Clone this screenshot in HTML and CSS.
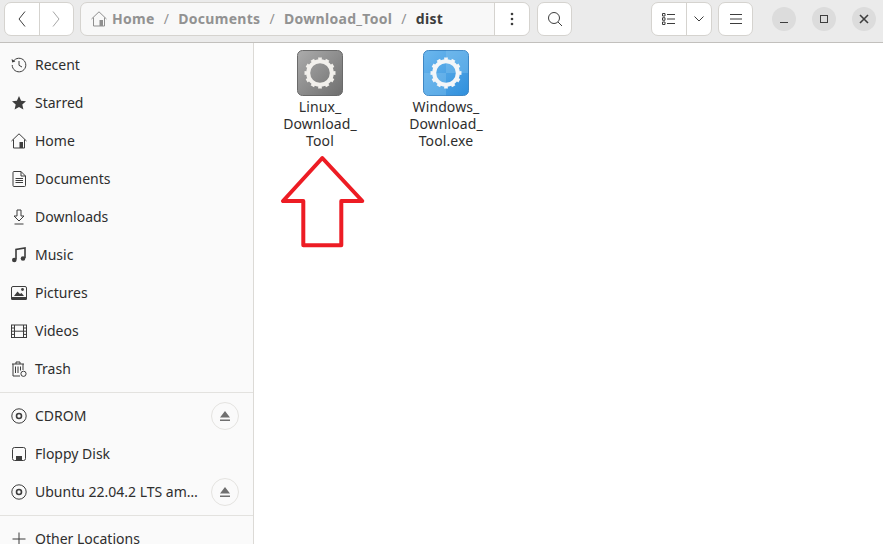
FILE: index.html
```html
<!DOCTYPE html>
<html lang="en">
<head>
<meta charset="utf-8">
<title>dist</title>
<link rel="stylesheet" href="styles.css">
</head>
<body>
<div class="window">
  <header class="toolbar">
    <div class="group nav">
      <button class="btn seg"><svg width="16" height="16" viewBox="0 0 16 16"><path d="M11 0.5 L5 8 L11 15.5" class="ln"/></svg></button>
      <button class="btn seg dim"><svg width="16" height="16" viewBox="0 0 16 16"><path d="M5 0.5 L11 8 L5 15.5" class="ln"/></svg></button>
    </div>
    <div class="group path">
      <div class="crumbs">
        <svg class="home-ic" width="16" height="16" viewBox="0 0 16 16"><path d="M0.5 8 L8 0.8 L15.5 8 M2.5 6.5 V15 H13.5 V6.5" class="ln"/><rect x="8.5" y="9" width="3.5" height="6" fill="#8f8f8f"/></svg>
        <span class="crumb">Home</span><span class="sep">/</span>
        <span class="crumb">Documents</span><span class="sep">/</span>
        <span class="crumb">Download_Tool</span><span class="sep">/</span>
        <span class="crumb cur">dist</span>
      </div>
      <button class="btn more"><svg width="4" height="14" viewBox="0 0 4 14"><circle cx="2" cy="2" r="1.3" fill="#3d3d3d"/><circle cx="2" cy="7" r="1.3" fill="#3d3d3d"/><circle cx="2" cy="12" r="1.3" fill="#3d3d3d"/></svg></button>
    </div>
    <button class="group btn single search"><svg width="16" height="16" viewBox="0 0 16 16"><circle cx="7" cy="7" r="5.5" class="ln"/><path d="M11 11 L15 15" class="ln"/></svg></button>
    <div class="group view">
      <button class="btn vlist"><svg width="14" height="12" viewBox="0 0 14 12"><path d="M0.5 0.5h2.500v2.500h-2.500zM0.5 4.750h2.500v2.500h-2.500zM0.5 9h2.500v2.500h-2.500z" class="ln"/><path d="M5 1.5H13M5 6H13M5 10.5H13" class="ln"/></svg></button>
      <button class="btn vdrop"><svg width="10" height="6" viewBox="0 0 10 6"><path d="M0.5 0.5 L5 5 L9.5 0.5" class="ln"/></svg></button>
    </div>
    <button class="group btn single menu"><svg width="12" height="10" viewBox="0 0 12 10"><path d="M0 0.5H12M0 5H12M0 9.5H12" class="ln"/></svg></button>
    <div class="wm">
      <button class="wbtn"><svg width="10" height="10" viewBox="0 0 10 10"><path d="M1 8.5H9" class="ln"/></svg></button>
      <button class="wbtn"><svg width="10" height="10" viewBox="0 0 10 10"><rect x="1.5" y="1.5" width="7" height="7" class="ln"/></svg></button>
      <button class="wbtn"><svg width="10" height="10" viewBox="0 0 10 10"><path d="M1 1L9 9M9 1L1 9" class="ln thick"/></svg></button>
    </div>
  </header>
  <div class="content">
    <aside class="sidebar">
      <ul class="places">
        <li class="row"><svg class="ic" width="16" height="16" viewBox="0 0 16 16"><path d="M2.2 4.500 A6.800 6.800 0 1 1 1.200 8" class="ln"/><path d="M0.6 2 L1.200 5.400 L4.400 4.600Z" fill="#3d3d3d"/><path d="M8 4 V8.300 L11 10" class="ln"/></svg><span class="label">Recent</span></li>
        <li class="row"><svg class="ic" width="16" height="16" viewBox="0 0 16 16"><path d="M8 1 L10.100 5.700 L15 6.200 L11.300 9.500 L12.400 14.500 L8 11.900 L3.600 14.500 L4.700 9.500 L1 6.200 L5.900 5.700Z" fill="#3d3d3d"/></svg><span class="label">Starred</span></li>
        <li class="row"><svg class="ic" width="16" height="16" viewBox="0 0 16 16"><path d="M0.5 8 L8 0.8 L15.500 8 M2.500 6.500 V15 H13.500 V6.500" class="ln"/><rect x="8.500" y="9" width="3.500" height="6" fill="#3d3d3d"/></svg><span class="label">Home</span></li>
        <li class="row"><svg class="ic" width="16" height="16" viewBox="0 0 16 16"><path d="M2 1.500 A1 1 0 0 1 3 0.500 H10 L14.500 5 V14.500 A1 1 0 0 1 13.500 15.500 H3 A1 1 0 0 1 2 14.500Z M10 0.500 V5 H14.500" class="ln"/><path d="M4.500 7.500H12M4.500 9.500H12M4.500 11.500H12" class="ln"/></svg><span class="label">Documents</span></li>
        <li class="row"><svg class="ic" width="16" height="16" viewBox="0 0 16 16"><path d="M6 1 H10 V7 H13 L8 12 L3 7 H6Z" class="ln"/><path d="M3.500 15 H12.500" class="ln"/></svg><span class="label">Downloads</span></li>
        <li class="row"><svg class="ic" width="16" height="16" viewBox="0 0 16 16"><path d="M5 12.500 V2.500 L14 1 V11" class="ln thick"/><circle cx="3.300" cy="13" r="2.300" fill="#3d3d3d"/><circle cx="12" cy="11.500" r="2.300" fill="#3d3d3d"/></svg><span class="label">Music</span></li>
        <li class="row"><svg class="ic" width="16" height="16" viewBox="0 0 16 16"><rect x="0.500" y="1.500" width="15" height="13" rx="1.500" class="ln"/><path d="M0 12 H16 V13.500 A1.500 1.500 0 0 1 14.500 15 H1.500 A1.500 1.500 0 0 1 0 13.500Z" fill="#3d3d3d"/><path d="M3 11 L6.500 6.500 L9 9 L10.500 8 L13 11Z" fill="#3d3d3d"/><circle cx="11.500" cy="4.500" r="1.400" fill="#3d3d3d"/></svg><span class="label">Pictures</span></li>
        <li class="row"><svg class="ic" width="16" height="16" viewBox="0 0 16 16"><rect x="0.500" y="2" width="15" height="12.500" class="ln"/><path d="M3.500 2V14.500M12.500 2V14.500M3.500 8.200H12.500M0.500 5H3.500M0.500 8.200H3.500M0.500 11.400H3.500M12.500 5H15.500M12.500 8.200H15.500M12.500 11.400H15.500" class="ln"/></svg><span class="label">Videos</span></li>
        <li class="row"><svg class="ic" width="16" height="16" viewBox="0 0 16 16"><path d="M1 3 H13 M5 3 V1 H9 V3 M2 3 V15 H9 M12 3 V9" class="ln"/><path d="M4.500 5.500V12M7 5.500V12M9.500 5.500V9.500" class="ln"/><circle cx="12.500" cy="12.800" r="2.600" class="ln"/></svg><span class="label">Trash</span></li>
      </ul>
      <hr class="divider">
      <ul class="places">
        <li class="row"><svg class="ic" width="16" height="16" viewBox="0 0 16 16"><circle cx="8" cy="8" r="7.200" class="ln"/><circle cx="8" cy="8" r="2.500" class="ln thick"/></svg><span class="label grow">CDROM</span><button class="eject"><svg width="12" height="12" viewBox="0 0 12 12"><path d="M6 1 L11 7.500 H1Z M1 9.500 H11 V11 H1Z" fill="#6f6f6f"/></svg></button></li>
        <li class="row"><svg class="ic" width="16" height="16" viewBox="0 0 16 16"><rect x="1.500" y="1.500" width="13" height="13" rx="2" class="ln"/><path d="M5 15 V10 H11 V15Z" fill="#3d3d3d"/></svg><span class="label grow">Floppy Disk</span></li>
        <li class="row"><svg class="ic" width="16" height="16" viewBox="0 0 16 16"><circle cx="8" cy="8" r="7.200" class="ln"/><circle cx="8" cy="8" r="2.500" class="ln thick"/></svg><span class="label grow">Ubuntu 22.04.2 LTS am…</span><button class="eject"><svg width="12" height="12" viewBox="0 0 12 12"><path d="M6 1 L11 7.500 H1Z M1 9.500 H11 V11 H1Z" fill="#6f6f6f"/></svg></button></li>
      </ul>
      <hr class="divider">
      <ul class="places">
        <li class="row"><svg class="ic" width="16" height="16" viewBox="0 0 16 16"><path d="M8 1.500V14.500M1.500 8H14.500" class="ln"/></svg><span class="label">Other Locations</span></li>
      </ul>
    </aside>
    <main class="files">
      <div class="file">
        <svg class="tile" width="46" height="46" viewBox="0 0 46 46">
          <defs><linearGradient id="g1" x1="0" y1="0" x2="1" y2="1"><stop offset="0" stop-color="#acacac"/><stop offset="1" stop-color="#6e6e6e"/></linearGradient></defs>
          <rect x="0.500" y="0.500" width="45" height="45" rx="5" fill="url(#g1)" stroke="#6a6a6a"/>
          <circle cx="23" cy="23" r="11.800" fill="none" stroke="#f2f0ec" stroke-width="4"/>
          <circle cx="23" cy="23" r="13.800" fill="none" stroke="#f2f0ec" stroke-width="3.400" pathLength="120" stroke-dasharray="5 5" stroke-dashoffset="2.500"/>
        </svg>
        <div class="name">Linux_<br>Download_<br>Tool</div>
      </div>
      <div class="file">
        <svg class="tile" width="46" height="46" viewBox="0 0 46 46">
          <defs><linearGradient id="g2" x1="0" y1="0" x2="1" y2="1"><stop offset="0" stop-color="#6db8ee"/><stop offset="1" stop-color="#2f8fdc"/></linearGradient></defs>
          <rect x="0.500" y="0.500" width="45" height="45" rx="5" fill="url(#g2)" stroke="#3f87c4"/>
          <path d="M23 23H45V5A4.500 4.500 0 0 0 40.500 0.800H23ZM23 23H1V41A4.500 4.500 0 0 0 5.500 45.200H23Z" fill="#8cc8f2" opacity=".35"/>
          <circle cx="23" cy="23" r="11.800" fill="none" stroke="#f4f6f8" stroke-width="4"/>
          <circle cx="23" cy="23" r="13.800" fill="none" stroke="#f4f6f8" stroke-width="3.400" pathLength="120" stroke-dasharray="5 5" stroke-dashoffset="2.500"/>
        </svg>
        <div class="name">Windows_<br>Download_<br>Tool.exe</div>
      </div>
    </main>
  </div>
  <svg class="arrow" width="90" height="100" viewBox="0 0 90 100"><path d="M41.300 3 L2 46 H22.300 V90.300 H60.300 V46 H81.300 Z" fill="none" stroke="#ed1c24" stroke-width="4" stroke-linejoin="round"/></svg>
</div>
</body>
</html>
```
FILE: styles.css
```css
* { box-sizing: border-box; }
html, body { margin: 0; padding: 0; height: 100%; overflow: hidden; }
body { font-family: "Noto Sans", sans-serif; font-size: 14px; color: #2e2e2e; background: #fff; }
button { font: inherit; padding: 0; margin: 0; border: 0; background: none; color: inherit; display: flex; align-items: center; justify-content: center; }
ul { list-style: none; margin: 0; padding: 0; }
.ln { fill: none; stroke: #3d3d3d; stroke-width: 1; }
.thick { stroke-width: 1.6; }
.window { position: relative; width: 883px; height: 544px; overflow: hidden; display: flex; flex-direction: column; }

.toolbar { height: 43px; flex: none; display: flex; align-items: flex-start; padding: 2px 0 0 4px; background: #ebebeb; border-bottom: 1px solid #c2c0bd; }
.group { height: 34px; background: #fff; border: 1px solid #d5d3cf; border-radius: 7px; display: flex; flex: none; }
.nav { width: 70px; }
.seg { flex: 1; }
.seg + .seg { border-left: 1px solid #d5d3cf; }
.dim svg { opacity: .45; }
.path { width: 450px; margin-left: 6px; background: #f8f8f8; }
.crumbs { flex: 1; display: flex; align-items: center; padding-left: 10px; font-weight: 700; letter-spacing: .3px; color: #929292; white-space: nowrap; }
.crumb, .sep { padding-bottom: 2px; }
.home-ic { margin-right: 5px; }
.home-ic .ln { stroke: #8f8f8f; }
.sep { margin: 0 9px; font-weight: 400; }
.cur { color: #3d3d3d; }
.more { width: 35px; background: #fff; border-left: 1px solid #d5d3cf; border-radius: 0 7px 7px 0; }
.single { width: 35px; }
.search { margin-left: 7px; }
.view { width: 61px; margin-left: 79px; }
.vlist { width: 35px; border-right: 1px solid #d5d3cf; }
.vdrop { flex: 1; }
.menu { margin-left: 6px; }
.wm { display: flex; gap: 16px; margin: 5px 0 0 19px; }
.wbtn { width: 24px; height: 24px; border-radius: 50%; background: #dcdcdc; }

.content { flex: 1; display: flex; min-height: 0; }
.sidebar { width: 254px; flex: none; padding-top: 3px; background: #fafafa; border-right: 1px solid #dcdad6; }
.row { height: 38px; display: flex; align-items: center; padding: 0 14px 0 10px; color: #2e2e2e; }
.ic { flex: none; margin-right: 8px; margin-left: 1px; }
.label { padding-bottom: 2px; }
.grow { flex: 1; min-width: 0; white-space: nowrap; }
.divider { border: 0; border-top: 1px solid #e3e2df; margin: 4px 0 4px; height: 0; }
.eject { width: 28px; height: 28px; flex: none; border: 1px solid #e4e3e0; border-radius: 50%; background: #fafafa; }

.files { flex: 1; display: flex; align-items: flex-start; padding: 7px 0 0 18px; gap: 30px; background: #fff; }
.file { width: 96px; display: flex; flex-direction: column; align-items: center; }
.tile { display: block; }
.name { margin-top: 2px; text-align: center; line-height: 17px; letter-spacing: .1px; color: #2e2e2e; }
.arrow { position: absolute; left: 281px; top: 155px; }
```
